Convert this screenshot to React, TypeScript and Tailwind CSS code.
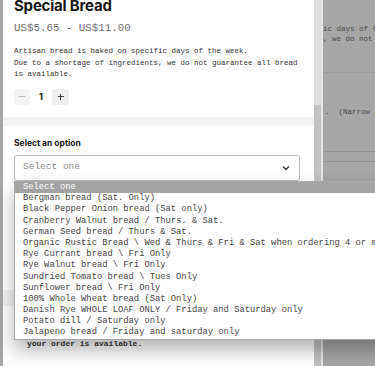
import React from "react";

const options = [
  "Select one",
  "Bergman bread (Sat. Only)",
  "Black Pepper Onion bread (Sat only)",
  "Cranberry Walnut bread / Thurs. & Sat.",
  "German Seed bread / Thurs & Sat.",
  "Organic Rustic Bread \\ Wed & Thurs & Fri & Sat when ordering 4 or more loaves",
  "Rye Currant bread \\ Fri Only",
  "Rye Walnut bread \\ Fri Only",
  "Sundried Tomato bread \\ Tues Only",
  "Sunflower bread \\ Fri Only",
  "100% Whole Wheat bread (Sat Only)",
  "Danish Rye WHOLE LOAF ONLY / Friday and Saturday only",
  "Potato dill / Saturday only",
  "Jalapeno bread / Friday and saturday only",
];

const mono = "font-['Liberation_Mono',monospace]";

export default function App() {
  return (
    <div className="relative w-[375px] h-[366px] overflow-hidden bg-[#a6a6a6] font-['Inter',sans-serif]">
      {/* background page seen through the overlay */}
      <div className={`absolute left-[323px] top-0 w-[60px] h-full flex flex-col text-[7.5px] leading-[10px] text-[#4a4a4a] whitespace-pre ${mono}`}>
        <div className="mt-[24px]">ic days of t</div>
        <div>, we do not</div>
        <div className="mt-[28px] h-px bg-[#9c9c9c]" />
        <div className="mt-[34px] pl-[2px]">.  (Narrow an</div>
        <div className="mt-[34px] h-px bg-[#959595]" />
        <div className="mt-[9px] h-px bg-[#959595]" />
      </div>

      {/* modal */}
      <div className="absolute left-[3px] top-0 w-[320px] h-full flex">
        <div className="w-[311px] h-full bg-white flex flex-col">
          <div className="px-[11px] flex flex-col">
            <div className="mt-[-4px] text-[15px] leading-[20px] font-bold text-[#161616] tracking-[-0.2px]">
              Special Bread
            </div>
            <div className={`mt-[5px] text-[10.8px] leading-[14px] text-[#6f6f6f] ${mono}`}>
              US$5.65 - US$11.00
            </div>
            <div className={`mt-[11px] text-[7.5px] leading-[11.5px] text-[#333] whitespace-pre ${mono}`}>
              <div>Artisan bread is baked on specific days of the week.</div>
              <div>Due to a shortage of ingredients, we do not guarantee all bread</div>
              <div>is available.</div>
            </div>
            <div className="mt-[8px] flex items-center h-[16px]">
              <div className="w-[16px] h-[16px] rounded-[3px] bg-[#f4f4f4] flex items-center justify-center">
                <div className="w-[6px] h-px bg-[#b5b5b5]" />
              </div>
              <div className="w-[22px] text-center text-[9px] font-bold text-[#161616]">1</div>
              <div className="w-[17px] h-[16px] rounded-[3px] bg-[#efefef] flex items-center justify-center relative">
                <div className="w-[6px] h-px bg-[#444]" />
                <div className="absolute w-px h-[6px] bg-[#444]" />
              </div>
            </div>
          </div>
          <div className="mt-[12px] h-[9px] bg-[#f3f3f3]" />
          <div className="px-[11px] flex flex-col">
            <div className="mt-[11px] text-[8.5px] leading-[12px] font-bold text-[#161616]">
              Select an option
            </div>
            <div className="mt-[6px] h-[26px] w-[286px] border border-[#b9b9b9] rounded-[3px] flex items-center justify-between pl-[8px] pr-[8px]">
              <span className={`text-[9.5px] text-[#8a8a8a] ${mono}`}>Select one</span>
              <svg width="8" height="6" viewBox="0 0 8 6" className="mr-[1px]">
                <path d="M1 1.5 L4 4.5 L7 1.5" fill="none" stroke="#333" strokeWidth="1.3" />
              </svg>
            </div>
          </div>
          <div className="mt-[109px] h-[16px] bg-[#f3f3f3]" />
          <div className={`mt-[33px] pl-[24px] text-[8px] leading-[10px] font-bold text-[#333] ${mono}`}>
            your order is available.
          </div>
        </div>
        {/* scrollbar */}
        <div className="w-[7px] h-full bg-[#dcdcdc] flex flex-col">
          <div className="mt-[105px] flex-1 bg-[#c2c2c2]" />
        </div>
        <div className="w-[2px] h-full bg-[#e6e6e6]" />
      </div>

      {/* native dropdown list */}
      <div className={`absolute left-[14px] top-[181px] w-[420px] bg-white border border-[#a8a8a8] shadow-[0_10px_18px_rgba(0,0,0,0.3)] ${mono}`}>
        {options.map((o, i) => (
          <div
            key={o}
            className={`h-[11.2px] leading-[11.2px] pl-[8px] text-[8.8px] whitespace-pre ${
              i === 0 ? "bg-[#a3a3a3] text-white" : "text-[#444]"
            }`}
          >
            {o}
          </div>
        ))}
      </div>
    </div>
  );
}
